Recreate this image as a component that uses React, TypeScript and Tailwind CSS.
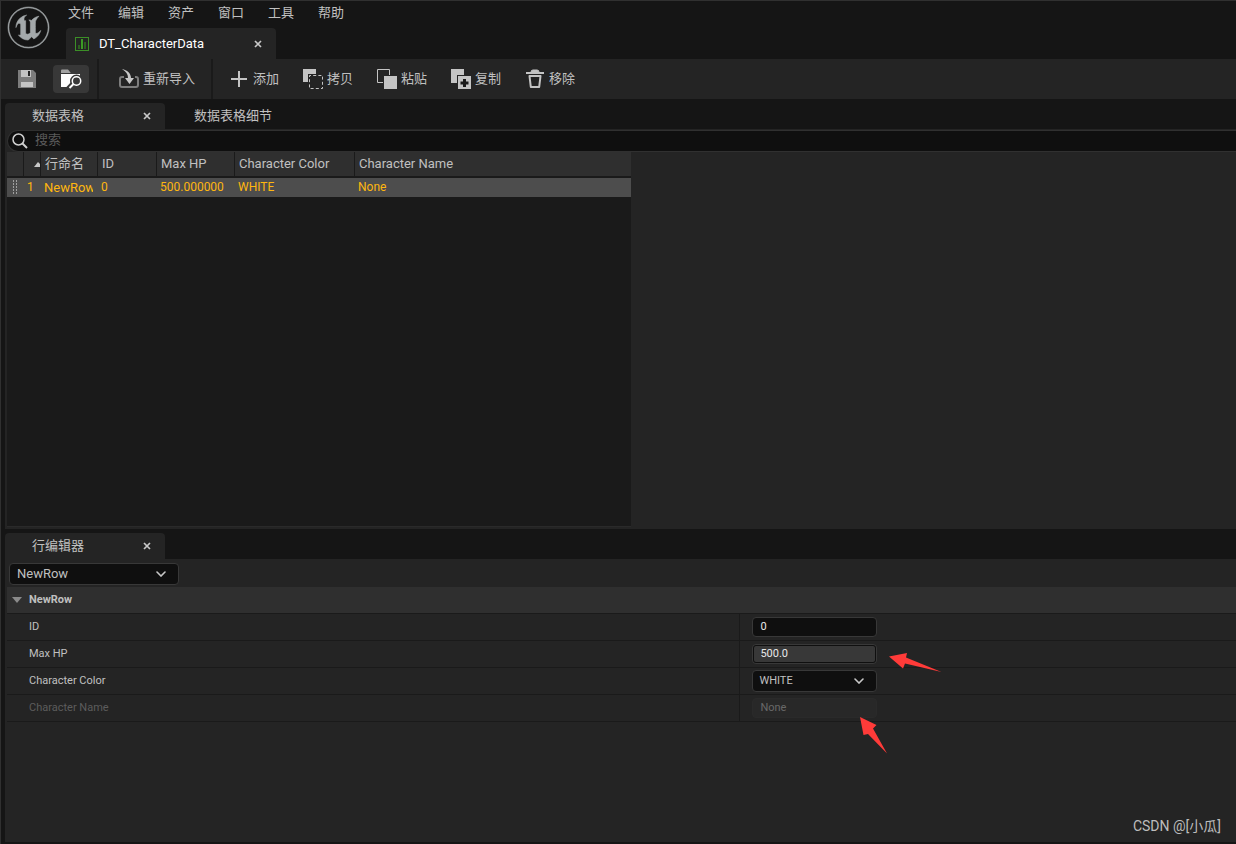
import type { ReactNode } from 'react';
import { SiUnrealengine } from 'react-icons/si';

const MENUS = ['文件', '编辑', '资产', '窗口', '工具', '帮助'];

function CloseIcon() {
  return (
    <svg width="8" height="8" viewBox="0 0 8 8" stroke="currentColor" strokeWidth="1.7" aria-hidden="true">
      <path d="M1 1l6 6M7 1L1 7" />
    </svg>
  );
}

function Chevron() {
  return (
    <svg width="10" height="6" viewBox="0 0 10 6" fill="none" stroke="#c8c8c8" strokeWidth="1.6" strokeLinecap="round" aria-hidden="true" className="pointer-events-none absolute top-2 right-[13px]">
      <path d="M1 1l4 4 4-4" />
    </svg>
  );
}

function SaveIcon() {
  return (
    <svg width="18" height="18" viewBox="0 0 18 18" aria-hidden="true">
      <path d="M0 0h15l3 3v15H0z" fill="#7d7d7d" />
      <path d="M3 0h10v7H3zM3 12h12v5H3z" fill="#c4c4c4" />
      <path d="M10 1h2v5h-2z" fill="#242424" />
    </svg>
  );
}

function BrowseIcon() {
  return (
    <svg width="22" height="20" viewBox="0 0 22 20" aria-hidden="true">
      <path d="M1 4V1.500Q1 .5 2 .5h6l2.500 3V4z" fill="#a3a3a3" />
      <path d="M1 5h19v13H1z" fill="#fff" />
      <circle cx="16.500" cy="12" r="6.500" fill="#383838" />
      <path d="M12 12l-6 6.500h16V14z" fill="#383838" />
      <circle cx="16.500" cy="12" r="4.200" fill="#383838" stroke="#fff" strokeWidth="1.500" />
      <path d="M13.500 15L9.500 19" stroke="#fff" strokeWidth="2" />
    </svg>
  );
}

function ReimportIcon() {
  return (
    <svg width="20" height="20" viewBox="0 0 20 20" fill="none" aria-hidden="true">
      <path d="M5 8H3Q1 8 1 10v6q0 2 2 2h14q2 0 2-2v-6q0-2-2-2h-1" stroke="#7d7d7d" strokeWidth="2" />
      <path d="M3 0c5 1 9 4 9 9h3l-4.500 6L6 9h3C9 5 7 2.500 3 0z" fill="#c8c8c8" />
    </svg>
  );
}

function PlusIcon() {
  return (
    <svg width="20" height="20" viewBox="0 0 20 20" stroke="#c4c4c4" strokeWidth="2" aria-hidden="true">
      <path d="M10 2v16M2 10h16" />
    </svg>
  );
}

function CopyIcon() {
  return (
    <svg width="20" height="20" viewBox="0 0 20 20" fill="none" aria-hidden="true">
      <path d="M0 0h13v5H5v8H0z" fill="#c4c4c4" />
      <rect x="6.500" y="6.500" width="13" height="13" stroke="#c4c4c4" strokeDasharray="3 2.200" strokeDashoffset="1.500" />
    </svg>
  );
}

function PasteIcon() {
  return (
    <svg width="20" height="20" viewBox="0 0 20 20" fill="none" aria-hidden="true">
      <path d="M6 13.500H.5V.5h12V6" stroke="#c4c4c4" />
      <path d="M7 7h13v13H7z" fill="#c4c4c4" />
    </svg>
  );
}

function DuplicateIcon() {
  return (
    <svg width="20" height="20" viewBox="0 0 20 20" aria-hidden="true">
      <path d="M0 0h13v6H6v8H0z" fill="#c4c4c4" />
      <path d="M7 7h13v13H7z" fill="#c4c4c4" />
      <path d="M13.500 10v8M9.500 14h8" stroke="#1a1a1a" strokeWidth="3" />
    </svg>
  );
}

function TrashIcon() {
  return (
    <svg width="20" height="20" viewBox="0 0 20 20" fill="none" stroke="#c4c4c4" aria-hidden="true">
      <path d="M1 4h18" strokeWidth="2" />
      <path d="M6 3q0-2 2-2h4q2 0 2 2" fill="#c4c4c4" />
      <path d="M4.500 7l1.300 11h8.400l1.300-11z" strokeWidth="2" strokeLinejoin="round" />
    </svg>
  );
}

function AssetIcon() {
  return (
    <svg width="14" height="14" viewBox="0 0 14 14" aria-hidden="true">
      <rect x=".5" y=".5" width="13" height="13" fill="none" stroke="#3c8f27" />
      <path d="M6 2h2v10H6z" fill="#3c9a25" />
      <path d="M3 8h2v4H3zM9 5h2v7H9z" fill="#2c5f20" />
    </svg>
  );
}

function ToolButton({ icon, label }: { icon: ReactNode; label: string }) {
  return (
    <button type="button" className="flex h-7 shrink-0 items-center gap-1 rounded px-2 hover:bg-[#383838]">
      {icon}
      <span>{label}</span>
    </button>
  );
}

function PanelTab({ label }: { label: string }) {
  return (
    <div className="flex h-[26px] w-40 items-center justify-between rounded-t bg-[#242424] pr-3.5 pl-[27px]">
      <span>{label}</span>
      <button type="button" aria-label={`关闭${label}`} className="text-[#c8c8c8]">
        <CloseIcon />
      </button>
    </div>
  );
}

function PropertyRow({ label, id, disabled, children }: { label: string; id: string; disabled?: boolean; children: ReactNode }) {
  return (
    <div className="grid h-[27px] grid-cols-[148fr_100fr] border-b border-[#1a1a1a]">
      <label htmlFor={id} className={disabled ? 'flex items-center border-r border-[#1a1a1a] pl-[22px] text-[#5c5c5c]' : 'flex items-center border-r border-[#1a1a1a] pl-[22px]'}>
        {label}
      </label>
      <div className="relative flex items-center pl-3">{children}</div>
    </div>
  );
}

export default function App() {
  return (
    <div className="relative flex min-h-screen flex-col border-t border-l border-[#303030] bg-[#151515] font-['Roboto','Noto_Sans_CJK_SC',sans-serif] text-[13px] leading-5 text-[#c0c0c0]">
      <header className="flex h-[58px] shrink-0">
        <div className="w-[65px] shrink-0 pt-1.5 pl-[7px]">
          <SiUnrealengine size={41} color="#a4a9ab" strokeWidth={0.35} className="overflow-visible" aria-label="Unreal Engine" />
        </div>
        <div>
          <nav className="flex h-[27px] items-center gap-6 pb-1 pl-0.5">
            {MENUS.map((m) => (
              <button type="button" key={m}>{m}</button>
            ))}
          </nav>
          <div className="flex h-[31px] w-[210px] items-center rounded-t bg-[#242424] pr-3.5 pl-[9px] text-white">
            <AssetIcon />
            <span className="ml-2.5 flex-1">DT_CharacterData</span>
            <button type="button" aria-label="关闭" className="text-[#c8c8c8]">
              <CloseIcon />
            </button>
          </div>
        </div>
      </header>

      <div role="toolbar" className="flex h-10 shrink-0 items-center bg-[#242424]">
        <div className="flex gap-2 px-2">
          <button type="button" aria-label="保存" className="flex h-7 w-9 items-center justify-center rounded">
            <SaveIcon />
          </button>
          <button type="button" aria-label="浏览" className="flex h-7 w-9 items-center justify-center rounded bg-[#383838]">
            <BrowseIcon />
          </button>
        </div>
        <div className="h-full w-0.5 bg-[#1a1a1a]" />
        <div className="pr-2 pl-3">
          <ToolButton icon={<ReimportIcon />} label="重新导入" />
        </div>
        <div className="h-full w-0.5 bg-[#1a1a1a]" />
        <div className="flex gap-2 px-2">
          <ToolButton icon={<PlusIcon />} label="添加" />
          <ToolButton icon={<CopyIcon />} label="拷贝" />
          <ToolButton icon={<PasteIcon />} label="粘贴" />
          <ToolButton icon={<DuplicateIcon />} label="复制" />
          <ToolButton icon={<TrashIcon />} label="移除" />
        </div>
      </div>

      <main className="flex flex-1 flex-col gap-1 pt-1 pb-0.5 pl-1">
        <section>
          <div className="flex">
            <PanelTab label="数据表格" />
            <button type="button" className="pl-[29px]">数据表格细节</button>
          </div>
          <div className="bg-[#242424] pt-px pb-0.5 pl-0.5">
            <div className="flex h-[22px] items-center rounded-l-full border border-r-0 border-[#303030] bg-[#0f0f0f] pl-1">
              <svg width="16" height="16" viewBox="0 0 16 16" fill="none" stroke="#d0d0d0" strokeWidth="1.5" aria-hidden="true">
                <circle cx="6.500" cy="6.500" r="5.500" />
                <path d="M10.500 10.500L15 15" strokeWidth="2" />
              </svg>
              <input type="search" aria-label="搜索" placeholder="搜索" className="ml-[7px] h-5 flex-1 bg-transparent pb-0.5 outline-none placeholder:text-[#5a5a5a]" />
            </div>
            <div className="grid grid-cols-[103fr_100fr]">
              <div className="h-[375px] border-b border-[#2a2a2a] bg-[#1a1a1a]">
                <table className="w-full table-fixed border-separate border-spacing-0">
                  <colgroup>
                    <col className="w-[17px]" />
                    <col className="w-[17px]" />
                    <col className="w-[57px]" />
                    <col className="w-[59px]" />
                    <col className="w-[78px]" />
                    <col className="w-[120px]" />
                    <col />
                  </colgroup>
                  <thead>
                    <tr className="h-[26px]">
                      <th className="border-r border-b-2 border-[#1a1a1a] bg-[#2f2f2f] p-0" aria-label="拖动" />
                      <th className="border-r border-b-2 border-[#1a1a1a] bg-[#2f2f2f] p-0" aria-label="序号">
                        <svg width="6" height="5" viewBox="0 0 6 5" className="ml-auto" aria-hidden="true">
                          <path d="M0 5l4-5 2 2v3z" fill="#c8c8c8" />
                        </svg>
                      </th>
                      {['行命名', 'ID', 'Max HP', 'Character Color'].map((h) => (
                        <th key={h} className="border-r border-b-2 border-[#1a1a1a] bg-[#2f2f2f] p-0 pl-1 text-left font-normal whitespace-nowrap">{h}</th>
                      ))}
                      <th className="border-b-2 border-[#1a1a1a] bg-[#2f2f2f] p-0 pl-1 text-left font-normal whitespace-nowrap">Character Name</th>
                    </tr>
                  </thead>
                  <tbody>
                    <tr className="h-[19px] bg-[#4d4d4d] text-[12px] leading-[19px] text-[#ffb70f]">
                      <td className="p-0 pl-[5px]">
                        <svg width="6" height="15" viewBox="0 0 6 15" stroke="#a0a0a0" strokeDasharray="2 1" aria-hidden="true">
                          <path d="M1.500 0v15M4.500 0v15" />
                        </svg>
                      </td>
                      <td className="p-0 pl-[3px]">1</td>
                      <td className="p-0 pr-[5px] pl-[3px] whitespace-nowrap">
                        <div className="overflow-hidden text-[13px]">NewRow</div>
                      </td>
                      <td className="p-0 pl-[3px]">0</td>
                      <td className="p-0 pl-[3px]">500.000000</td>
                      <td className="p-0 pl-[3px]">WHITE</td>
                      <td className="p-0 pl-[3px]">None</td>
                    </tr>
                  </tbody>
                </table>
              </div>
            </div>
          </div>
        </section>

        <section className="flex flex-1 flex-col">
          <PanelTab label="行编辑器" />
          <div className="flex-1 bg-[#242424] pl-0.5 text-[11px]">
            <div className="px-0.5 pt-1 pb-0.5">
              <div className="relative w-[170px]">
                <select aria-label="行" className="h-[22px] w-full appearance-none rounded border border-[#383838] bg-[#0f0f0f] pl-[7px] text-[13px] leading-5">
                  <option>NewRow</option>
                </select>
                <Chevron />
              </div>
            </div>
            <button type="button" className="flex h-[27px] w-full items-center gap-1.5 border-b border-[#1a1a1a] bg-[#2f2f2f] pl-[5px] font-bold">
              <svg width="11" height="6" viewBox="0 0 11 6" aria-hidden="true">
                <path d="M0 0h10L5 6z" fill="#8a8a8a" />
              </svg>
              NewRow
            </button>
            <PropertyRow label="ID" id="row-id">
              <input id="row-id" type="text" defaultValue="0" className="h-5 w-[125px] rounded border border-[#383838] bg-[#0f0f0f] px-[7px] text-[#e8e8e8]" />
            </PropertyRow>
            <PropertyRow label="Max HP" id="row-hp">
              <div className="w-[125px] rounded border border-[#383838]">
                <input id="row-hp" type="text" defaultValue="500.0" className="block h-[18px] w-full rounded-[3px] border border-[#0f0f0f] bg-[#383838] px-1.5 text-[#e8e8e8]" />
              </div>
              <svg width="53" height="20" viewBox="0 0 53 20" aria-hidden="true" className="absolute top-[11px] left-[149px]">
                <path d="M0 4.500L18 1l-1 4.500L52.500 20 16 11.500 14 16.500z" fill="#ff3b39" />
              </svg>
            </PropertyRow>
            <PropertyRow label="Character Color" id="row-color">
              <div className="relative w-[125px]">
                <select id="row-color" className="block h-[22px] w-full appearance-none rounded border border-[#383838] bg-[#0f0f0f] pl-1.5">
                  <option>WHITE</option>
                </select>
                <Chevron />
              </div>
            </PropertyRow>
            <PropertyRow label="Character Name" id="row-name" disabled>
              <input id="row-name" type="text" defaultValue="None" disabled className="h-5 w-[125px] rounded border border-[#2a2a2a] bg-[#282828] px-[7px] text-[#686868]" />
              <svg width="28" height="38" viewBox="0 0 28 38" aria-hidden="true" className="absolute top-[22px] left-[120px]">
                <path d="M0 0L16.500 8 13 11.500 27 36.500 8 17 3.500 18z" fill="#ff3b39" />
              </svg>
            </PropertyRow>
          </div>
        </section>
      </main>

      <div className="absolute right-[15px] bottom-2 text-[14px] text-[#bdbdbd]">CSDN @[小瓜]</div>
    </div>
  );
}
